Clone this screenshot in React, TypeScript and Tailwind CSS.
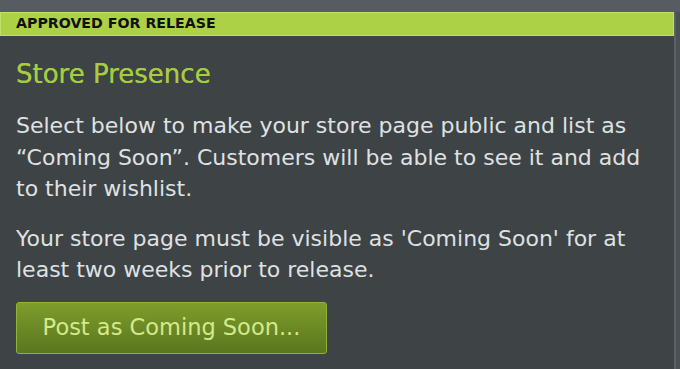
export default function App() {
  return (
    <div className="w-[680px] h-[369px] bg-[#3e4346] overflow-hidden flex flex-col" style={{ fontFamily: '"DejaVu Sans", "Noto Sans", sans-serif' }}>
      <div className="h-[12px] bg-[#565c61] shrink-0" />
      <div className="flex flex-1">
        <div className="flex-1 flex flex-col">
          <div className="h-[24px] bg-[#acd046] border border-[#c2df6c] flex items-center pl-[15px] text-[14.2px] font-bold text-[#111]">
            APPROVED FOR RELEASE
          </div>
          <div className="pl-[16px] pt-[22px] pr-[18px]">
            <div className="text-[26px] text-[#a6cc40] leading-[32px] [text-shadow:0_0_0.4px_#a6cc40]">Store Presence</div>
            <p className="mt-[20px] text-[22px] leading-[31.5px] text-[#dfe1e2]">
              Select below to make your store page public and list as “Coming Soon”. Customers will be able to see it and add to their wishlist.
            </p>
            <p className="mt-[18px] text-[22px] leading-[31.5px] text-[#dfe1e2]">
              Your store page must be visible as 'Coming Soon' for at least two weeks prior to release.
            </p>
            <button className="mt-[16px] w-[311px] h-[52px] rounded-[3px] border border-[#93b23a] bg-gradient-to-b from-[#7e9d2b] to-[#5a7620] text-[22.5px] text-[#d4ea8a] text-center">
              Post as Coming Soon...
            </button>
          </div>
        </div>
        <div className="w-[6px] bg-[#4b5054] border-l-2 border-[#5c6166]" />
      </div>
    </div>
  );
}
